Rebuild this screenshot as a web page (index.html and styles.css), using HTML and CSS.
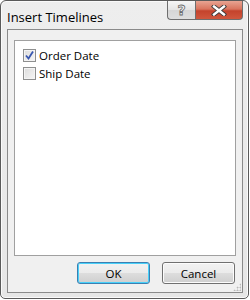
FILE: index.html
```html
<!DOCTYPE html>
<html>
<head>
<meta charset="utf-8">
<link rel="stylesheet" href="styles.css">
</head>
<body>
<div class="window">
  <div class="titlebar">
    <span class="title">Insert Timelines</span>
    <div class="caption-buttons">
      <div class="cap-btn help">?</div>
      <div class="cap-btn close">
        <svg width="16" height="11" viewBox="0 0 16 11">
          <path d="M3 1.5 L13 9.5 M13 1.5 L3 9.5" stroke="#3a3a3a" stroke-width="4.2" stroke-linecap="square" fill="none"/>
          <path d="M3 1.5 L13 9.5 M13 1.5 L3 9.5" stroke="#ffffff" stroke-width="2.4" stroke-linecap="square" fill="none"/>
        </svg>
      </div>
    </div>
  </div>
  <div class="client">
    <div class="listbox">
      <label class="item"><span class="cb checked"><svg width="11" height="11" viewBox="0 0 11 11"><path d="M2 5.5 L4.5 8.5 L9 1.5" stroke="#3857b0" stroke-width="1.8" fill="none"/></svg></span><span class="lbl">Order Date</span></label>
      <label class="item"><span class="cb"></span><span class="lbl">Ship Date</span></label>
    </div>
    <div class="buttons">
      <div class="btn default">OK</div>
      <div class="btn">Cancel</div>
    </div>
    <div class="grip"></div>
  </div>
</div>
</body>
</html>
```
FILE: styles.css
```css
html, body {
  margin: 0;
  padding: 0;
  background: #ffffff;
}
body {
  width: 250px;
  height: 300px;
  font-family: "Open Sans", "Noto Sans", sans-serif;
  font-size: 11.5px;
  color: #000;
}
.window {
  box-sizing: border-box;
  width: 249px;
  height: 299px;
  border: 1px solid #5a5a5a;
  border-radius: 6px 6px 5px 5px;
  background: linear-gradient(#eeeeee, #e6e6e6);
  display: flex;
  flex-direction: column;
  box-shadow: inset 0 0 0 1px #fafafa;
}
.titlebar {
  height: 28px;
  display: flex;
  justify-content: space-between;
  align-items: flex-start;
  flex: none;
}
.title {
  margin: 9px 0 0 6px;
  font-size: 13px;
  line-height: 15px;
  color: #000;
}
.caption-buttons {
  display: flex;
  margin-right: 5px;
}
.cap-btn {
  box-sizing: border-box;
  height: 19px;
  border: 1px solid #6e6e6e;
  border-top: none;
  display: flex;
  align-items: center;
  justify-content: center;
}
.help {
  width: 28px;
  border-radius: 0 0 0 4px;
  border-right: none;
  background: linear-gradient(#f6f6f6, #e4e4e4 50%, #d6d6d6 51%, #dedede);
  color: #f2f2f2;
  font-family: "DejaVu Sans", sans-serif;
  font-size: 14px;
  font-weight: bold;
  -webkit-text-stroke: 0.8px #6a6a6a;
}
.close {
  width: 48px;
  border-radius: 0 0 4px 0;
  background: linear-gradient(#e8a492, #d9745e 45%, #c4432c 55%, #d0573d);
}
.client {
  flex: 1;
  margin: 0 5px 5px 6px;
  border: 1px solid #8a8a8a;
  background: #f0f0f0;
  display: flex;
  flex-direction: column;
  position: relative;
}
.listbox {
  margin: 10px 6px 0 6px;
  height: 216px;
  border: 1px solid #a0a0a0;
  background: #ffffff;
  padding: 8px 0 0 8px;
  display: flex;
  flex-direction: column;
  gap: 5px;
  box-sizing: border-box;
}
.item {
  display: flex;
  align-items: center;
  height: 13px;
}
.cb {
  box-sizing: border-box;
  width: 13px;
  height: 13px;
  border: 1px solid #8e8f8f;
  background: linear-gradient(135deg, #dcdcdc, #f6f6f6);
  box-shadow: inset 0 0 0 1px #f4f4f4;
  display: flex;
  align-items: center;
  justify-content: center;
  margin-right: 3px;
}
.lbl {
  line-height: 13px;
}
.buttons {
  display: flex;
  justify-content: flex-end;
  gap: 12px;
  margin: 6px 7px 0 0;
}
.btn {
  box-sizing: border-box;
  width: 73px;
  height: 22px;
  border: 1px solid #707070;
  border-radius: 3px;
  background: linear-gradient(#f2f2f2, #ebebeb 50%, #dddddd 51%, #cfcfcf);
  box-shadow: inset 0 0 0 1px #fcfcfc;
  display: flex;
  align-items: center;
  justify-content: center;
}
.btn.default {
  border-color: #3c7fb1;
  box-shadow: inset 0 0 0 1px #48d0f9;
}
.grip {
  position: absolute;
  right: 1px;
  bottom: 1px;
  width: 8px;
  height: 8px;
  background-image: radial-gradient(circle, #b8b8b8 0.8px, transparent 1.2px);
  background-size: 3px 3px;
  clip-path: polygon(100% 0, 100% 100%, 0 100%);
}
```
